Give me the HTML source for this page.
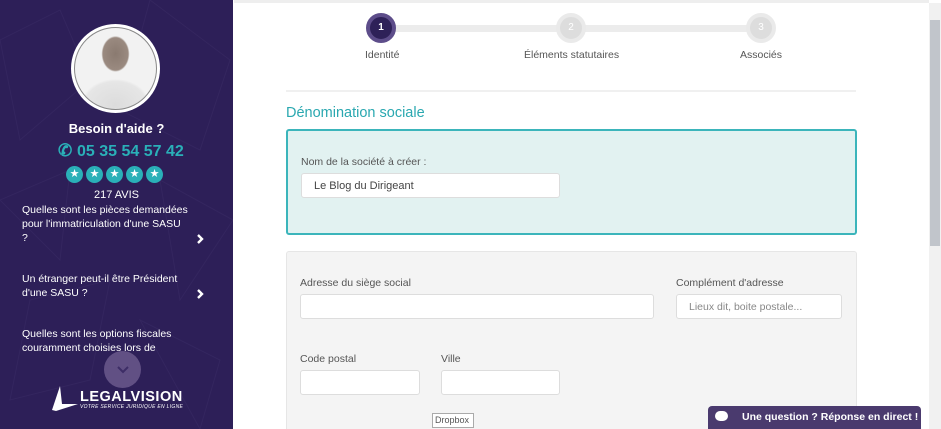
<!DOCTYPE html>
<html><head><meta charset="utf-8"><style>
*{margin:0;padding:0;box-sizing:border-box}
html,body{width:941px;height:429px;overflow:hidden}
body{background:#fff;font-family:"Liberation Sans",sans-serif;position:relative}
.a{position:absolute}
.side{left:0;top:0;width:233px;height:429px;background:#2d1f58;overflow:hidden}
.w{color:#fff}
.q{left:22px;font-size:10.5px;line-height:14px;color:#fff;white-space:nowrap}
.chev{left:195px;width:10px;height:10px}
.lab{font-size:10.5px;color:#555}
.inp{background:#fff;border:1px solid #ddd;border-radius:3px}
.star{width:17px;height:17px;border-radius:50%;background:#2ab0b8;color:#fff;font-size:11px;text-align:center;line-height:17px;top:166px}
.circ{width:30px;height:30px;border-radius:50%;top:13px;text-align:center;font-size:10px;color:#fff}
.step{font-size:10.5px;color:#555;top:49px}
</style></head><body>
<div class="a side">
<svg class="a" style="left:0;top:0" width="233" height="429" stroke="#34265f" stroke-width="1" fill="none">
<path d="M0 40 L60 10 L90 80 L20 140 Z M150 0 L230 60 L200 150 L120 110 Z M0 200 L70 170 L60 260 Z M160 180 L233 220 L180 300 Z M30 300 L110 280 L90 380 L10 400 Z M140 320 L220 360 L200 429 Z"/>
</svg>
<div class="a" style="left:71px;top:24px;width:89px;height:89px;border-radius:50%;background:#fff;padding:3px"><div style="width:100%;height:100%;border-radius:50%;border:1px solid #888;background:radial-gradient(ellipse 14px 18px at 50% 32%,#8a7a70 0,#9a8a80 90%,transparent 100%),radial-gradient(ellipse 34px 26px at 50% 95%,#dcdcdc 0,#e6e6e6 90%,transparent 100%),#f2f2f2"></div></div>
<div class="a w" style="left:0;width:233px;top:121px;text-align:center;font-weight:bold;font-size:13px">Besoin d'aide ?</div>
<div class="a" style="left:58px;top:141px;font-size:17px;color:#2ab0b8;font-weight:bold">&#9990; <span style="font-size:16px">05 35 54 57 42</span></div>
<div class="a star" style="left:66px">★</div><div class="a star" style="left:86px">★</div><div class="a star" style="left:106px">★</div><div class="a star" style="left:126px">★</div><div class="a star" style="left:146px">★</div>
<div class="a w" style="left:0;width:233px;text-align:center;top:189px;font-size:11px">217 AVIS</div>
<div class="a q" style="top:203px">Quelles sont les pièces demandées<br>pour l'immatriculation d'une SASU<br>?</div>
<svg class="a chev" style="top:234px" viewBox="0 0 10 10"><path d="M3 1 L7 5 L3 9" stroke="#fff" stroke-width="2.4" fill="none"/></svg>
<div class="a q" style="top:272px">Un étranger peut-il être Président<br>d'une SASU ?</div>
<svg class="a chev" style="top:289px" viewBox="0 0 10 10"><path d="M3 1 L7 5 L3 9" stroke="#fff" stroke-width="2.4" fill="none"/></svg>
<div class="a q" style="top:327px">Quelles sont les options fiscales<br>couramment choisies lors de</div>
<div class="a" style="left:104px;top:351px;width:37px;height:37px;border-radius:50%;background:rgba(140,120,170,.55)"></div>
<svg class="a" style="left:116px;top:365px" width="14" height="10"><path d="M2 2 L7 7 L12 2" stroke="#3d2d66" stroke-width="2" fill="none"/></svg>
<svg class="a" style="left:52px;top:386px" width="28" height="26"><path d="M8 0 L10 18 L26 18 L4 25 L0 24 Z" fill="#fff"/></svg>
<div class="a w" style="left:80px;top:389px;font-weight:bold;font-size:14.5px;letter-spacing:.5px">LEGALVISION</div>
<div class="a w" style="left:80px;top:404px;font-size:5px;font-style:italic;letter-spacing:.3px">VOTRE SERVICE JURIDIQUE EN LIGNE</div>
</div>

<div class="a" style="left:234px;top:0;width:695px;height:3px;background:#eee"></div>
<div class="a" style="left:395px;top:25px;width:366px;height:7px;background:#ececec"></div>
<div class="a circ" style="left:366px;background:#2e2158;border:4px solid #5d4d8a;line-height:22px;font-weight:bold">1</div>
<div class="a circ" style="left:556px;background:#ddd;border:4px solid #eaeaea;line-height:22px">2</div>
<div class="a circ" style="left:746px;background:#ddd;border:4px solid #eaeaea;line-height:22px">3</div>
<div class="a step" style="left:365px">Identité</div>
<div class="a step" style="left:524px">Éléments statutaires</div>
<div class="a step" style="left:740px">Associés</div>
<div class="a" style="left:286px;top:90px;width:570px;height:2px;background:#f0f0f0"></div>
<div class="a" style="left:286px;top:105px;font-size:14.5px;color:#2aa8b0">Dénomination sociale</div>
<div class="a" style="left:286px;top:129px;width:571px;height:106px;background:#e2f2f1;border:2px solid #3bb5bb;border-radius:3px"></div>
<div class="a lab" style="left:301px;top:156px">Nom de la société à créer :</div>
<div class="a inp" style="left:301px;top:173px;width:259px;height:25px;font-size:11px;color:#444;padding:6px 12px">Le Blog du Dirigeant</div>
<div class="a" style="left:286px;top:251px;width:571px;height:178px;background:#f4f4f4;border:1px solid #e6e6e6;border-bottom:none;border-radius:3px 3px 0 0"></div>
<div class="a lab" style="left:300px;top:277px">Adresse du siège social</div>
<div class="a inp" style="left:300px;top:294px;width:354px;height:25px"></div>
<div class="a lab" style="left:676px;top:277px">Complément d'adresse</div>
<div class="a inp" style="left:676px;top:294px;width:166px;height:25px;font-size:10.5px;color:#888;padding:6px 12px">Lieux dit, boite postale...</div>
<div class="a lab" style="left:300px;top:353px">Code postal</div>
<div class="a inp" style="left:300px;top:370px;width:120px;height:25px"></div>
<div class="a lab" style="left:441px;top:353px">Ville</div>
<div class="a inp" style="left:441px;top:370px;width:119px;height:25px"></div>
<div class="a" style="left:432px;top:413px;width:42px;height:15px;background:#fff;border:1px solid #aaa;font-size:9px;color:#555;padding:1px 2px">Dropbox</div>
<div class="a" style="left:708px;top:406px;width:213px;height:23px;background:#4a3a6e;border-radius:4px 4px 0 0;color:#fff;font-weight:bold;font-size:10.5px;padding:5px 0 0 34px;white-space:nowrap">Une question ? Réponse en direct !</div>
<div class="a" style="left:715px;top:411px;width:13px;height:10px;background:#fff;border-radius:5px"></div>
<div class="a" style="left:929px;top:3px;width:12px;height:426px;background:#f1f1f1"></div>
<div class="a" style="left:930px;top:20px;width:10px;height:226px;background:#c1c5cb"></div>
</body></html>
